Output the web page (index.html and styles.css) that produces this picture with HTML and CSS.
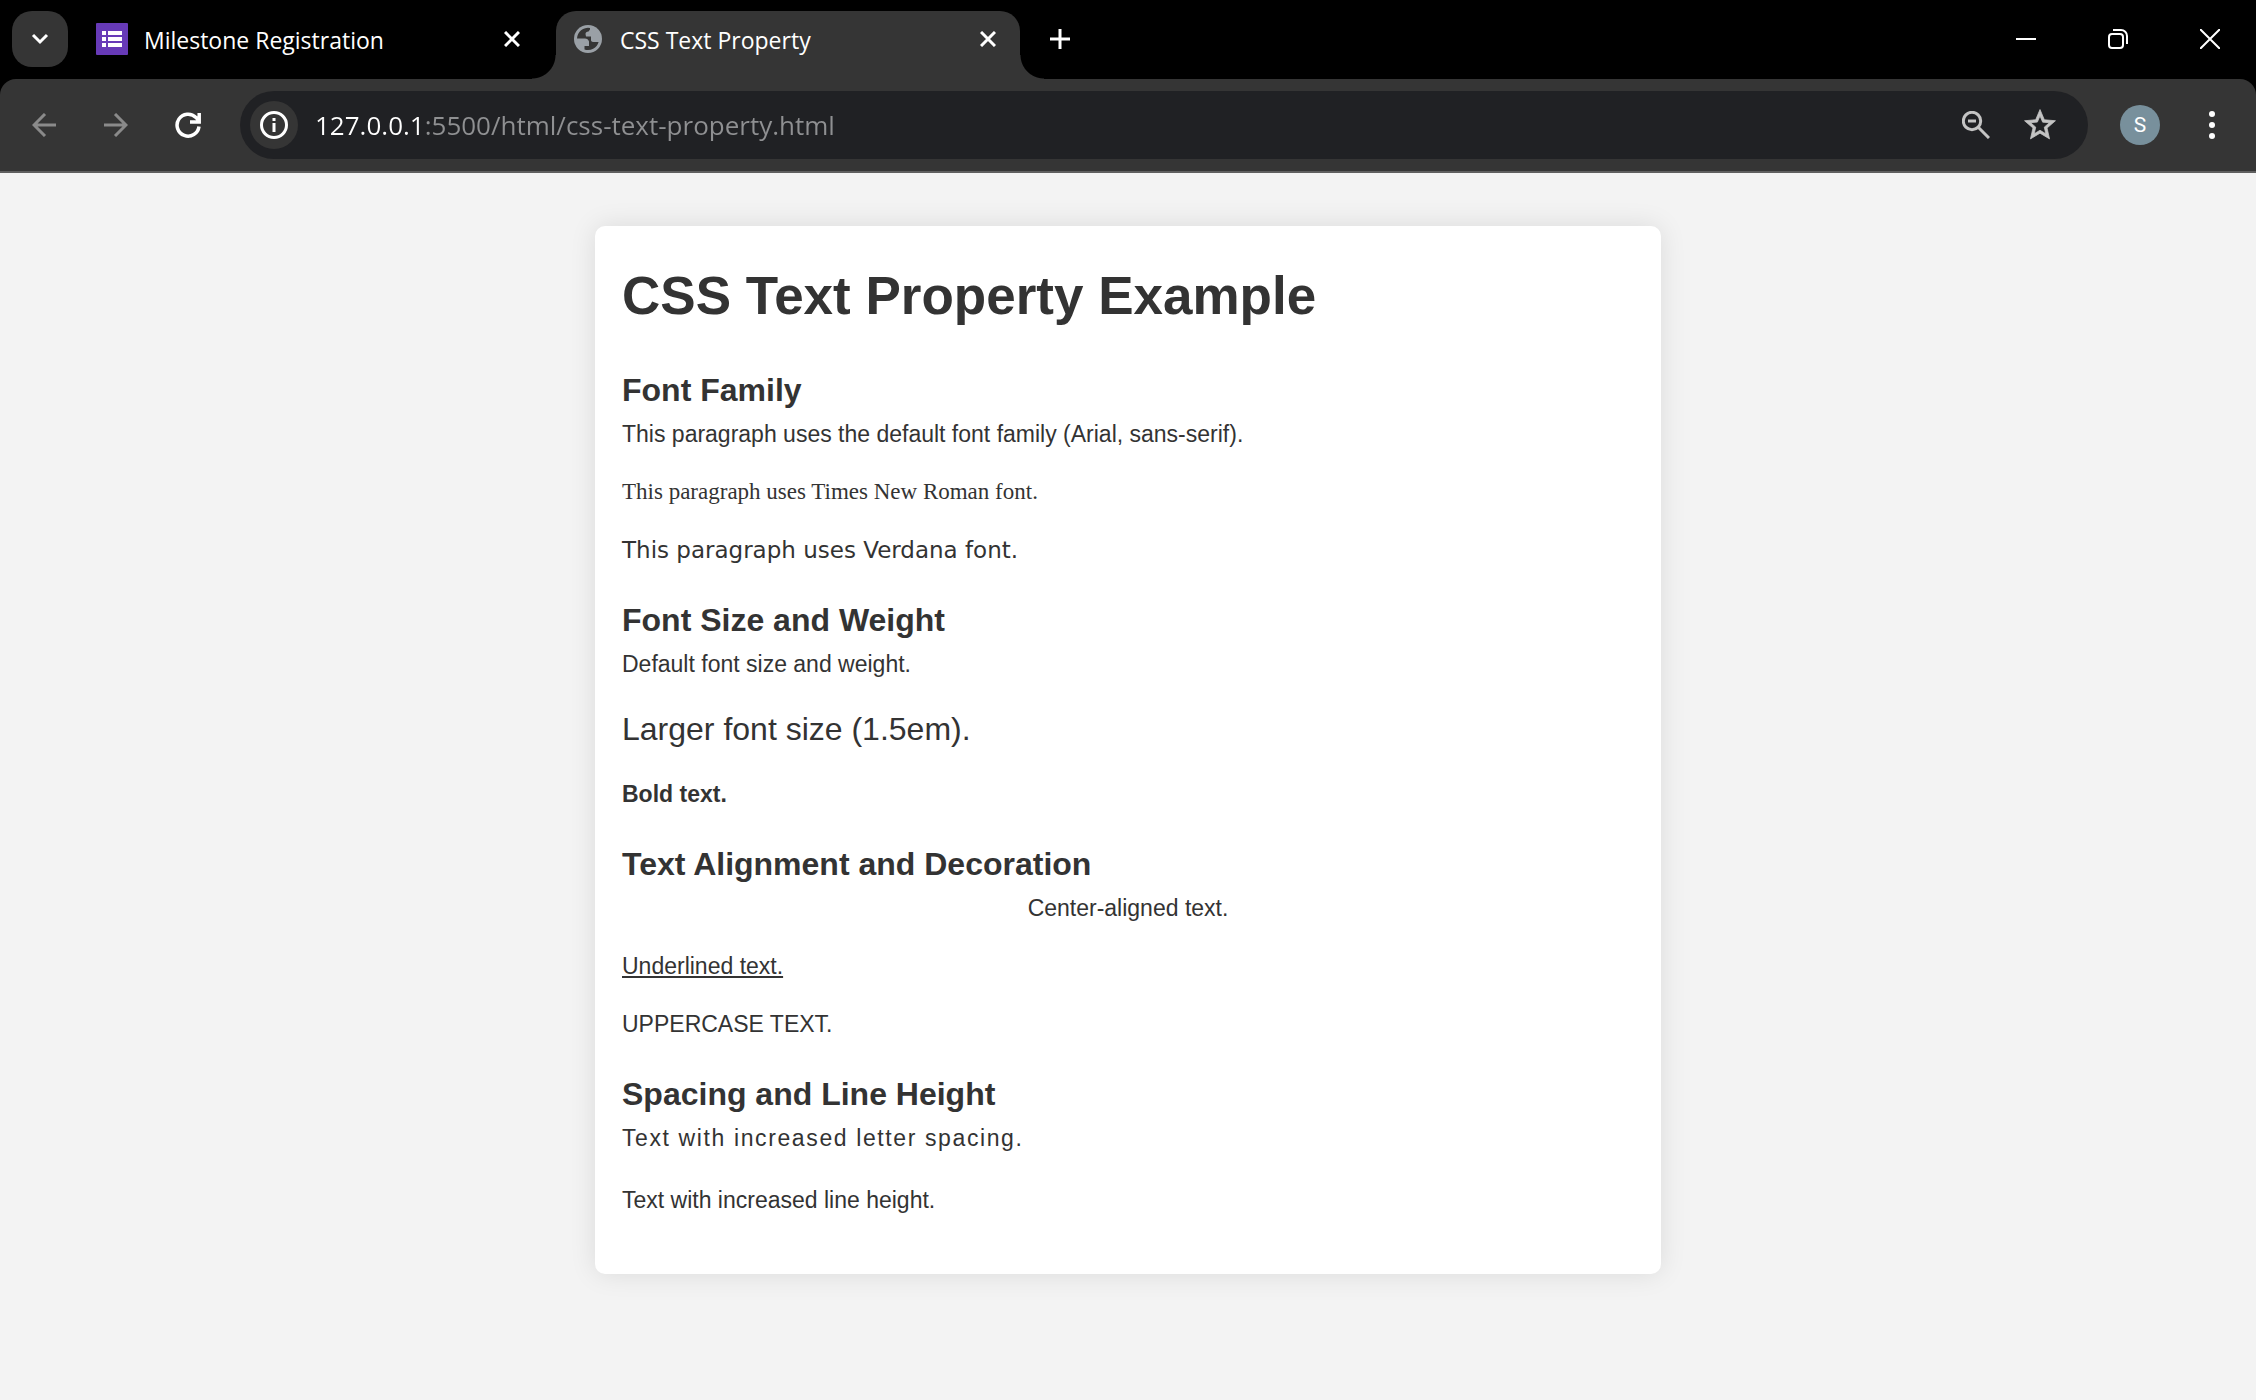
FILE: index.html
```html
<!DOCTYPE html>
<html lang="en">
<head>
<meta charset="utf-8">
<title>CSS Text Property</title>
<link rel="stylesheet" href="styles.css">
</head>
<body>
<header class="browser">
  <div class="tabstrip">
    <button class="tab-search" aria-label="Search tabs"><svg width="20" height="20" viewBox="0 0 20 20"><path d="M3 6l7 7 7-7" fill="none" stroke="#fff" stroke-width="3"/></svg></button>
    <div class="tab">
      <svg width="32" height="32" viewBox="0 0 32 32"><rect width="32" height="32" rx="1" fill="#673ab7"/><path d="M6 8h4v4H6zM12 8h14v4H12zM6 14h4v4H6zM12 14h14v4H12zM6 20h4v4H6zM12 20h14v4H12z" fill="#fff"/></svg>
      <span class="tab-title">Milestone Registration</span>
      <button class="tab-close" aria-label="Close tab"><svg width="16" height="16" viewBox="0 0 16 16"><path d="M1 1l14 14M15 1L1 15" stroke="#fff" stroke-width="3"/></svg></button>
    </div>
    <div class="tab tab-active">
      <svg width="28" height="28" viewBox="0 0 28 28"><circle cx="14" cy="14" r="14" fill="#9aa0a6"/><path fill="#353535" d="M3 13.500A11 11 0 0 1 16 3V4.500L14.500 6.500Q11.500 6.500 11.500 9L12 11.500H17V15.500Q17.500 17 19.500 17H24.600A11 11 0 0 1 10.500 24.500V21H15V16.500Q14 13.500 11 13.500Z"/></svg>
      <span class="tab-title">CSS Text Property</span>
      <button class="tab-close" aria-label="Close tab"><svg width="16" height="16" viewBox="0 0 16 16"><path d="M1 1l14 14M15 1L1 15" stroke="#fff" stroke-width="3"/></svg></button>
    </div>
    <button class="new-tab" aria-label="New tab"><svg width="20" height="20" viewBox="0 0 20 20"><path d="M10 0v20M0 10h20" stroke="#fff" stroke-width="3"/></svg></button>
    <div class="window-controls">
      <button aria-label="Minimize"><svg width="20" height="20" viewBox="0 0 20 20"><path d="M0 10h20" stroke="#fff" stroke-width="2"/></svg></button>
      <button aria-label="Restore"><svg width="20" height="20" viewBox="0 0 20 20" fill="none" stroke="#fff" stroke-width="2"><rect x="1" y="5" width="14" height="14" rx="3"/><path d="M5 1h8a6 6 0 0 1 6 6v8"/></svg></button>
      <button aria-label="Close"><svg width="20" height="20" viewBox="0 0 20 20"><path d="M0 0l20 20M20 0L0 20" stroke="#fff" stroke-width="2"/></svg></button>
    </div>
  </div>
  <nav class="toolbar" aria-label="Browser toolbar">
    <div class="nav-buttons">
      <button aria-label="Back"><svg width="24" height="24" viewBox="0 0 24 24" fill="none" stroke="#8a8a8a" stroke-width="3"><path d="M24 12H2M13 1L2 12l11 11"/></svg></button>
      <button aria-label="Forward"><svg width="24" height="24" viewBox="0 0 24 24" fill="none" stroke="#8a8a8a" stroke-width="3"><path d="M0 12h22M11 1l11 11-11 11"/></svg></button>
      <button aria-label="Reload"><svg width="26" height="26" viewBox="0 0 26 26" fill="none" stroke="#fff" stroke-width="3.500"><path d="M24 14.500A11 11 0 1 1 21 5.500l3 3M24.200 1v9H15"/></svg></button>
    </div>
    <div class="address">
      <button class="site-info" aria-label="View site information"><svg width="28" height="28" viewBox="0 0 28 28"><circle cx="14" cy="14" r="12.500" fill="none" stroke="#fff" stroke-width="3"/><path d="M14 12v9M14 7v3" stroke="#fff" stroke-width="3"/></svg></button>
      <input class="url" type="text" aria-label="Address" value="127.0.0.1:5500/html/css-text-property.html">
      <button class="address-action" aria-label="Zoom"><svg width="28" height="28" viewBox="0 0 28 28" fill="none" stroke="#c4c4c4" stroke-width="3"><circle cx="10" cy="10" r="8.700"/><path d="M6 10h8M16 16l11 11"/></svg></button>
      <button class="address-action" aria-label="Bookmark"><svg width="34" height="34" viewBox="1 1 22 22"><path fill="#c4c4c4" stroke="#c4c4c4" stroke-width=".5" d="M22 9.240l-7.190-.620L12 2 9.190 8.630 2 9.240l5.460 4.730L5.820 21 12 17.270 18.180 21l-1.630-7.030L22 9.240zM12 15.400l-3.760 2.270 1-4.280-3.320-2.880 4.380-.380L12 6.100l1.710 4.040 4.380.380-3.320 2.880 1 4.280L12 15.400z"/></svg></button>
    </div>
    <button class="avatar" aria-label="Profile">S</button>
    <button class="menu" aria-label="Menu"><svg width="6" height="28" viewBox="0 0 6 28" fill="#fff"><circle cx="3" cy="3" r="3"/><circle cx="3" cy="14" r="3"/><circle cx="3" cy="25" r="3"/></svg></button>
  </nav>
</header>
<main class="container">
  <h1>CSS Text Property Example</h1>
  <section>
    <h2>Font Family</h2>
    <p>This paragraph uses the default font family (Arial, sans-serif).</p>
    <p class="times">This paragraph uses Times New Roman font.</p>
    <p class="verdana">This paragraph uses Verdana font.</p>
  </section>
  <section>
    <h2>Font Size and Weight</h2>
    <p>Default font size and weight.</p>
    <p class="large">Larger font size (1.5em).</p>
    <p class="bold">Bold text.</p>
  </section>
  <section>
    <h2>Text Alignment and Decoration</h2>
    <p class="center">Center-aligned text.</p>
    <p class="underline">Underlined text.</p>
    <p class="uppercase">Uppercase text.</p>
  </section>
  <section>
    <h2>Spacing and Line Height</h2>
    <p class="spaced">Text with increased letter spacing.</p>
    <p class="tall">Text with increased line height.</p>
  </section>
</main>
</body>
</html>
```
FILE: styles.css
```css
* { box-sizing: border-box; }

body {
  margin: 0;
  background: #f3f3f3;
  color: #333;
  font-family: "Liberation Sans", Arial, sans-serif;
  font-size: 23px;
}

button {
  display: flex;
  align-items: center;
  justify-content: center;
  flex: none;
  padding: 0;
  border: 0;
  background: none;
  color: #fff;
  font: inherit;
}

svg { display: block; flex: none; }

.browser {
  background: #000;
  color: #fff;
  font-family: "Open Sans", "Noto Sans", sans-serif;
  font-size: 23px;
}

/* Tab strip */
.tabstrip {
  display: flex;
  height: 79px;
  padding: 11px 0 0 12px;
}

.tab-search {
  width: 56px;
  height: 56px;
  border-radius: 20px;
  background: #353535;
}

.tab {
  display: flex;
  align-items: center;
  flex: 0 1 428px;
  height: 56px;
  margin-left: 28px;
  gap: 16px;
}

.tab-title {
  flex: 1;
  padding-top: 2px;
  line-height: 32px;
  white-space: nowrap;
}

.tab-close { width: 24px; height: 24px; }

.tab-active {
  position: relative;
  flex-basis: 464px;
  height: 68px;
  margin-left: 32px;
  padding: 0 20px 12px 18px;
  gap: 18px;
  border-radius: 20px 20px 0 0;
  background: #353535;
}

.tab-active::before,
.tab-active::after {
  content: "";
  position: absolute;
  bottom: 0;
  width: 24px;
  height: 24px;
}

.tab-active::before {
  right: 100%;
  background: radial-gradient(circle at 0 0, transparent 23px, #353535 24px);
}

.tab-active::after {
  left: 100%;
  background: radial-gradient(circle at 100% 0, transparent 23px, #353535 24px);
}

.new-tab { width: 56px; height: 56px; margin-left: 12px; }

.window-controls { display: flex; margin-left: auto; }

.window-controls button { width: 92px; height: 56px; }

/* Toolbar */
.toolbar {
  display: flex;
  align-items: center;
  padding: 12px 16px 12px 8px;
  border-bottom: 2px solid #5f5f5f;
  border-radius: 16px 16px 0 0;
  background: #353535;
}

.nav-buttons { display: flex; }

.nav-buttons button { width: 72px; height: 56px; }

.address {
  display: flex;
  align-items: center;
  flex: 1;
  height: 68px;
  margin-left: 16px;
  padding: 0 16px 0 10px;
  border-radius: 34px;
  background: #202124;
}

.site-info {
  width: 48px;
  height: 48px;
  border-radius: 50%;
  background: #353535;
}

/* Host in white, port and path dimmed */
.url {
  flex: 1;
  min-width: 0;
  height: 48px;
  padding: 0;
  margin-left: 17px;
  border: 0;
  outline: 0;
  background: linear-gradient(90deg, #fff 108px, #8f9092 108px);
  background-clip: text;
  color: transparent;
  font-family: inherit;
  font-size: 26px;
}

.address-action { width: 64px; height: 56px; }

.avatar {
  width: 40px;
  height: 40px;
  margin-left: 32px;
  border-radius: 50%;
  background: #78909c;
  font-family: Roboto, sans-serif;
  font-size: 21px;
}

.menu { width: 56px; height: 56px; margin-left: 24px; }

/* Page */
.container {
  max-width: 1066px;
  margin: 53px auto;
  padding: 27px 27px 31px;
  border-radius: 10px;
  background: #fff;
  box-shadow: 0 0 27px rgba(0, 0, 0, 0.1);
}

h1 { margin: 0 0 32px; font-size: 53px; line-height: 86px; }

h2 { margin: 0 0 6px; font-size: 32px; line-height: 38px; }

p { margin: 0 0 20px; line-height: 38px; }

section + section { margin-top: 32px; }

.times { font-family: "Liberation Serif", "Times New Roman", serif; }
.verdana { font-family: "DejaVu Sans", Verdana, sans-serif; }
.large { font-size: 32px; line-height: 52px; }
.bold { font-weight: bold; }
.center { text-align: center; }
.underline { text-decoration: underline; }
.uppercase { text-transform: uppercase; }
.spaced { letter-spacing: 0.07em; }
.tall { line-height: 46px; }
```
